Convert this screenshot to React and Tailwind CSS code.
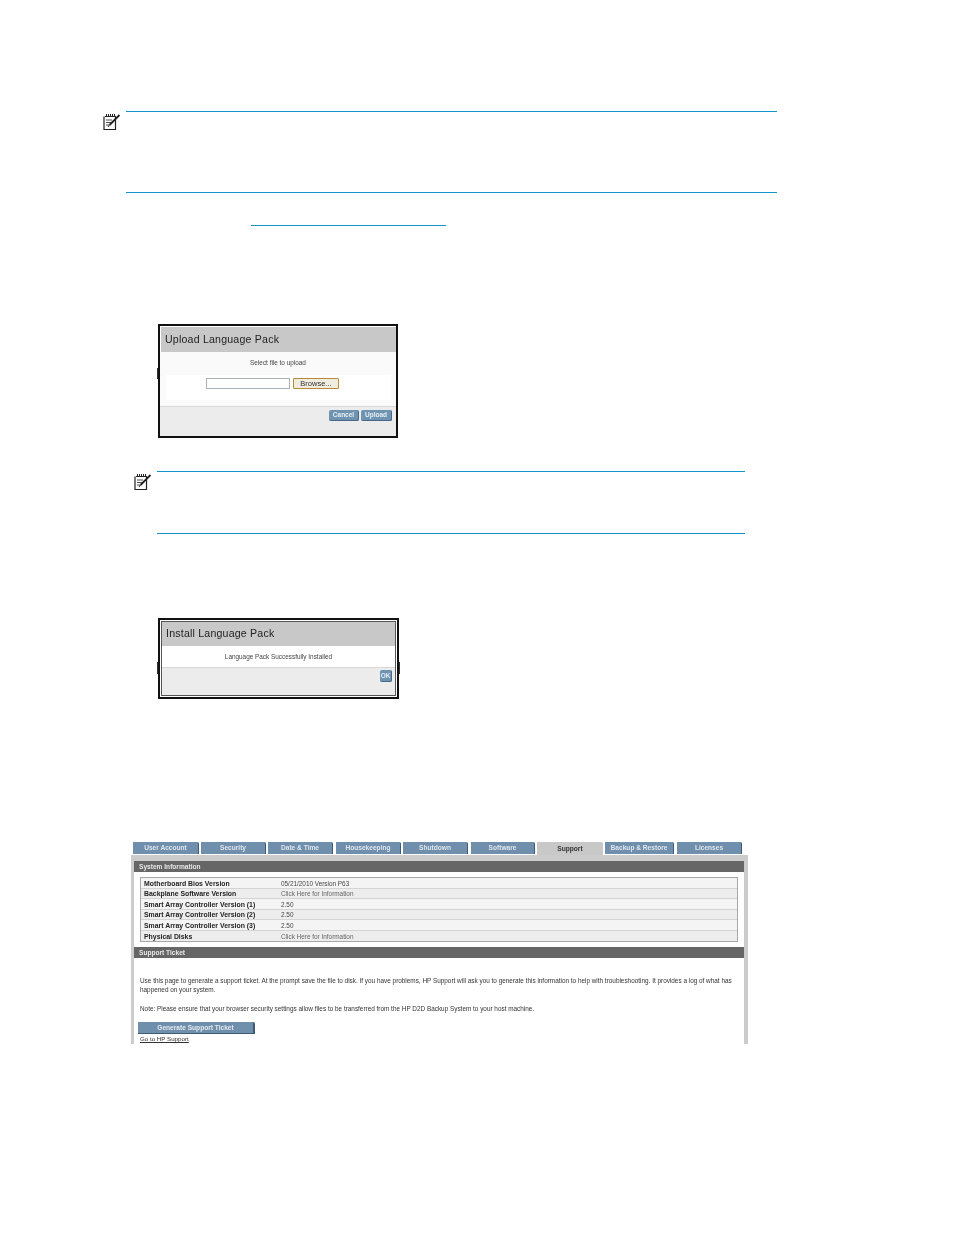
const sans = "font-['Liberation_Sans',Arial,sans-serif]"

const tabs = [
  { label: 'User Account', width: 'w-[66px]', gap: 'mr-[2px]' },
  { label: 'Security', width: 'w-[65px]', gap: 'mr-[2px]' },
  { label: 'Date & Time', width: 'w-[65px]', gap: 'mr-[3px]' },
  { label: 'Housekeeping', width: 'w-[65px]', gap: 'mr-[2px]' },
  { label: 'Shutdown', width: 'w-[65px]', gap: 'mr-[3px]' },
  { label: 'Software', width: 'w-[64px]', gap: 'mr-[2px]' },
  { label: 'Support', width: 'w-[66px]', gap: 'mr-[2px]', active: true },
  { label: 'Backup & Restore', width: 'w-[69px]', gap: 'mr-[3px]' },
  { label: 'Licenses', width: 'w-[65px]', gap: '' },
]

const rows = [
  ['Motherboard Bios Version', '05/21/2010 Version P63'],
  ['Backplane Software Version', 'Click Here for Information'],
  ['Smart Array Controller Version (1)', '2.50'],
  ['Smart Array Controller Version (2)', '2.50'],
  ['Smart Array Controller Version (3)', '2.50'],
  ['Physical Disks', 'Click Here for Information'],
]

function NoteIcon() {
  return (
    <svg width="18" height="18" viewBox="0 0 18 18" fill="none" stroke="#222" className="block blur-[0.3px]">
      <path d="M2 3.5H12.5V16.5H1V3.5" strokeWidth="1.2" />
      <path d="M3.5 1V4M5.5 1V4M7.5 1V4M9.5 1V4M11.5 1V4" strokeWidth="1" />
      <path d="M3 7H9M3 9.5H8M3 12H6" strokeWidth="0.8" />
      <path d="M6.5 12L16.5 2" strokeWidth="1.8" />
      <path d="M5 14L6.5 12" strokeWidth="1" />
    </svg>
  )
}

function DialogButton({ children, className }) {
  return (
    <div className={`flex items-center justify-center rounded-[2px] bg-[#6f94b2] border-r border-b border-[#47688a] text-[6.5px] font-bold text-[#e8eef3] ${className}`}>
      {children}
    </div>
  )
}

function App() {
  return (
    <div className={`w-[954px] h-[1235px] bg-white overflow-hidden pt-[111px] ${sans}`}>
      <div className="flex pl-[103px]">
        <div className="w-[23px] pt-[2px]">
          <NoteIcon />
        </div>
        <div className="w-[651px] h-[82px] border-t border-b border-[#0e94c8]" />
      </div>

      <div className="ml-[251px] mt-[32px] w-[195px] h-px bg-[#0e94c8]" />

      <div className="relative ml-[158px] mt-[98px] w-[240px] h-[114px] border-2 border-[#111] bg-[#ececec] flex flex-col blur-[0.35px]">
        <div className="absolute left-[-3px] top-[42px] w-px h-[11px] bg-[#333]" />
        <div className="h-[26px] bg-[#c8c8c8] border-l border-t border-white pl-[4px] flex items-center text-[10.6px] tracking-[0.2px] text-[#222]">
          Upload Language Pack
        </div>
        <div className="h-[55px] bg-[#fafafa] border-b border-[#d8d8d8] flex flex-col items-center">
          <div className="mt-[6px] text-[6.4px] leading-[9px] text-[#444]">Select file to upload</div>
          <div className="mt-[8px] w-[225px] h-[25px] bg-white flex justify-center gap-[3px] pt-[3px] pr-[11px]">
            <div className="w-[84px] h-[11px] border border-[#a9b2b8] bg-white" />
            <div className="w-[46px] h-[11px] border border-[#b98a34] bg-[#f1ece0] rounded-[1px] flex items-center justify-center text-[7.5px] text-[#333]">
              Browse...
            </div>
          </div>
        </div>
        <div className="flex justify-end gap-[2px] pt-[3px] pr-[4px]">
          <DialogButton className="w-[30px] h-[11px]">Cancel</DialogButton>
          <DialogButton className="w-[31px] h-[11px]">Upload</DialogButton>
        </div>
      </div>

      <div className="flex pl-[134px] mt-[33px]">
        <div className="w-[23px] pt-[2px]">
          <NoteIcon />
        </div>
        <div className="w-[588px] h-[63px] border-t border-b border-[#0e94c8]" />
      </div>

      <div className="relative ml-[158px] mt-[84px] w-[241px] h-[81px] border-2 border-[#111] blur-[0.35px]">
        <div className="absolute left-[-3px] top-[42px] w-px h-[12px] bg-[#333]" />
        <div className="absolute right-[-3px] top-[42px] w-px h-[12px] bg-[#333]" />
        <div className="h-full border border-white outline outline-[#555] outline-offset-[-2px] bg-[#ececec] flex flex-col">
          <div className="h-[25px] bg-[#c8c8c8] pl-[5px] flex items-center text-[10.6px] tracking-[0.2px] text-[#222]">
            Install Language Pack
          </div>
          <div className="h-[22px] bg-white border-b border-[#d8d8d8] flex items-center justify-center text-[6.4px] text-[#444]">
            Language Pack Successfully Installed
          </div>
          <div className="flex justify-end pt-[2px] pr-[4px]">
            <DialogButton className="w-[12px] h-[12px]">OK</DialogButton>
          </div>
        </div>
      </div>

      <div className="ml-[131px] mt-[143px] w-[617px] h-[202px] overflow-hidden blur-[0.35px]">
        <div className="flex pl-[2px] h-[13px]">
          {tabs.map((t) => (
            <div
              key={t.label}
              className={`${t.width} ${t.gap} flex items-center justify-center text-[6.6px] font-bold rounded-tr-[2px] ${
                t.active
                  ? 'bg-[#c8c8c8] text-[#333] h-[13px]'
                  : 'bg-[#6f8fac] text-[#dfe6ec] h-[12px] border-r border-[#3e5a75]'
              }`}
            >
              {t.label}
            </div>
          ))}
        </div>
        <div className="bg-[#cccccc] pl-[3px] pr-[4px] pt-[6px] h-[189px]">
          <div className="bg-white h-full">
            <div className="h-[11px] bg-[#666666] pl-[5px] flex items-center text-[6.6px] font-bold text-[#e8e8e8]">
              System Information
            </div>
            <div className="mx-[6px] mt-[5px] border border-[#a8a8a8]">
              {rows.map(([name, value], i) => (
                <div
                  key={name}
                  className={`h-[10.5px] flex items-center pl-[3px] pt-[2px] border-b border-[#d4d4d4] last:border-b-0 ${
                    i % 2 === 0 ? 'bg-[#f4f4f4]' : 'bg-[#ededed]'
                  }`}
                >
                  <span className="w-[137px] text-[6.9px] font-bold text-[#222]">{name}</span>
                  <span className={`text-[6.4px] ${value.startsWith('Click') ? 'text-[#666]' : 'text-[#444]'}`}>{value}</span>
                </div>
              ))}
            </div>
            <div className="mt-[5px] h-[11px] bg-[#666666] pl-[5px] flex items-center text-[6.6px] font-bold text-[#e8e8e8]">
              Support Ticket
            </div>
            <div className="pl-[6px] pr-[8px] pt-[18px] text-[6.4px] leading-[9px] text-[#333]">
              <p>
                Use this page to generate a support ticket. At the prompt save the file to disk. If you have problems, HP Support will ask you to generate this information to help with troubleshooting. It provides a log of what has happened on your system.
              </p>
              <p className="mt-[10px]">
                Note: Please ensure that your browser security settings allow files to be transferred from the HP D2D Backup System to your host machine.
              </p>
            </div>
            <div className="ml-[4px] mt-[9px] w-[117px] h-[12px] bg-[#6f8fac] border-r-2 border-b border-[#3e5a75] rounded-tr-[2px] flex items-center justify-center text-[6.6px] font-bold text-[#e4eaef]">
              Generate Support Ticket
            </div>
            <div className="ml-[6px] text-[6.2px] leading-[9px] underline text-[#333]">Go to HP Support</div>
          </div>
        </div>
      </div>
    </div>
  )
}

export default App
